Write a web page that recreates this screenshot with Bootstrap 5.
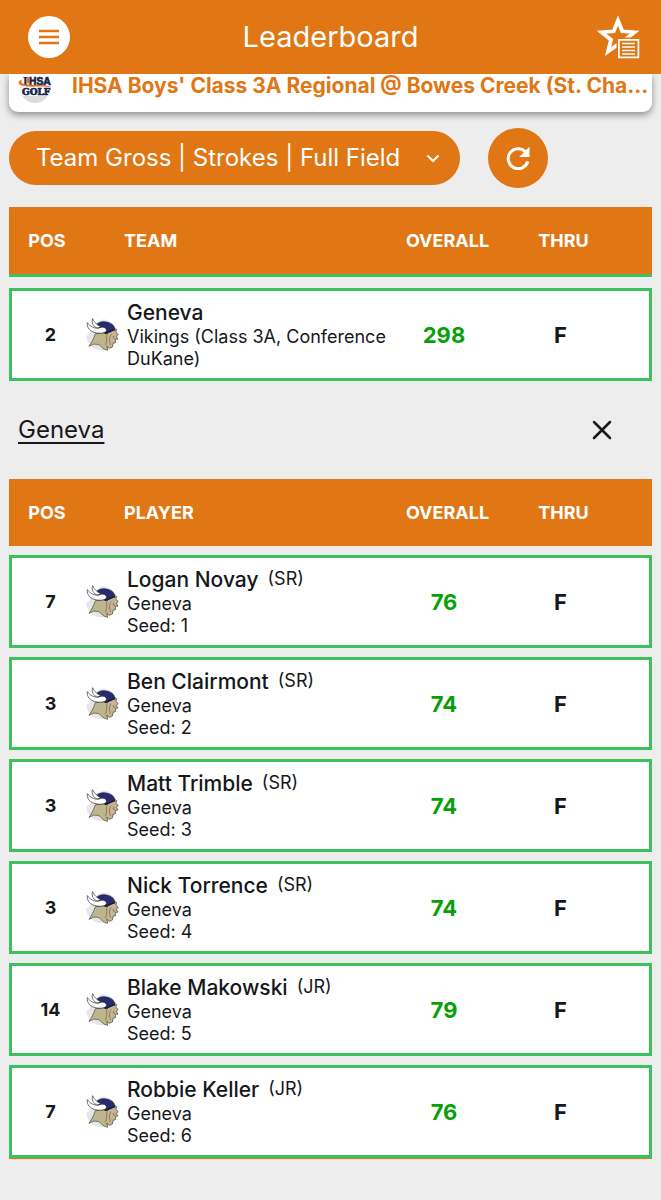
<!DOCTYPE html>
<html lang="en">
<head>
<meta charset="utf-8">
<meta name="viewport" content="width=device-width, initial-scale=1">
<title>Leaderboard</title>
<link href="https://cdn.jsdelivr.net/npm/bootstrap@5.3.0/dist/css/bootstrap.min.css" rel="stylesheet">
<style>
  :root { --brand: #e07714; --ink: #16171b; --edge: #3cc15d; --page: #ededed; }
  body { font-family: Inter, "Liberation Sans", sans-serif; background: var(--page); color: var(--ink); }
  .topbar { background: var(--brand); height: 74px; padding: 0 20px 0 28px; display: grid; grid-template-columns: 1fr auto 1fr; }
  .topbar h1 { font-size: 29px; line-height: 36px; font-weight: 400; padding-right: 8px; }
  .menu-btn { width: 42px; height: 42px; background: #fff; }
  .page-main { padding: 0 9px; }
  .event-card { background: #fff; border-radius: 0 0 9px 9px; height: 38px; padding: 0 4px 0 9px; box-shadow: 0 3px 7px rgba(0,0,0,.4); }
  .event-card a { color: var(--brand); font-size: 21px; line-height: 24px; font-weight: 700; margin-left: 20px; }
  .filters { gap: 28px; margin-top: 16px; margin-bottom: 19px; }
  .filter-pill { flex: 0 1 451px; height: 54px; border: 0; border-radius: 27px; padding: 0 56px 0 27px; font-size: 24px; line-height: 30px; color: #fff; background-color: var(--brand);
    background-image: url("data:image/svg+xml,%3Csvg xmlns='http://www.w3.org/2000/svg' viewBox='0 0 14 9'%3E%3Cpath d='M1.5 1.5 7 7l5.500-5.500' fill='none' stroke='white' stroke-width='2.200'/%3E%3C/svg%3E");
    background-position: right 20px center; background-size: 14px 9px; }
  .refresh-btn { width: 60px; height: 60px; background: var(--brand) !important; }
  .board { width: 100%; table-layout: fixed; border-collapse: separate; border-spacing: 0 9px; margin: -9px 0; }
  .board.scrolled { border-spacing: 0 11px; margin: -11px 0; }
  .board.scrolled th { height: 70px; border-bottom: 3px solid var(--edge); }
  .col-pos { width: 76px; } .col-overall { width: 105px; } .col-thru { width: 152px; }
  .board th { background: var(--brand); color: #fff; height: 67px; font-size: 18px; line-height: 22px; font-weight: 700; text-align: center; }
  .board th:nth-child(2) { text-align: left; padding-left: 39px; }
  .board th:last-child { padding-right: 26px; }
  .board td { background: #fff; height: 93px; border: solid var(--edge); border-width: 3px 0; text-align: center; vertical-align: middle; font-size: 22px; line-height: 26px; font-weight: 700; }
  .board td:first-child { border-left-width: 3px; font-size: 18px; padding-left: 5px; }
  .board td:nth-child(2) { text-align: left; font-weight: 400; }
  .board td:nth-child(3) { color: #08a008; padding-right: 8px; }
  .board td:last-child { border-right-width: 3px; padding-right: 29px; }
  .entry { gap: 8px; }
  .who { font-size: 21px; line-height: 26px; font-weight: 500; }
  .grade { font-size: 18px; line-height: 24px; margin-left: 9px; font-weight: 400; }
  .detail { font-size: 18px; line-height: 22px; }
  .team-head { height: 98px; padding: 0 38px 0 9px; }
  .team-head a { color: var(--ink); font-size: 24px; line-height: 30px; text-underline-offset: 4px; }
  .roster { border-bottom: 1px solid var(--brand); }
</style>
</head>
<body>
<svg class="d-none" aria-hidden="true">
  <symbol id="viking" viewBox="0 0 100 100">
    <circle cx="48" cy="51" r="47" fill="#e6e6ea"/>
    <path d="M0 0H60L34 12 8 50 0 54Z" fill="#fff"/>
    <path d="M28 48C24 62 17 74 9 86L24 79 37 80C45 83 47 91 56 95L66 98 63 85 71 92 80 88 82 77 90 74 88 65 97 64 92 55 98 50 90 43 93 35 84 31 72 40 58 44Z" fill="#bdb68d" stroke="#45412f" stroke-width="2"/>
    <path d="M72 42 84 33 88 42 92 51 85 56 88 68 79 72 76 84 70 88 66 74 72 62 66 52Z" fill="#ccb398"/>
    <path d="M66 45C58 57 67 66 59 82M76 50C68 62 72 70 74 82M84 54C80 60 84 63 88 63" fill="none" stroke="#6b5d42" stroke-width="2"/>
    <path d="M31 26C32 14 46 10 60 12 76 14 87 23 87 34L74 40 62 46 40 40Z" fill="#272b72" stroke="#17192f" stroke-width="2"/>
    <path d="M56 46C66 48 76 37 88 36" fill="none" stroke="#17192f" stroke-width="4"/>
    <path d="M20 2C16 15 22 25 34 31L45 26C35 22 26 15 20 2Z" fill="#fff" stroke="#272838" stroke-width="2"/>
    <path d="M4 14C2 30 13 42 31 45 46 48 60 45 62 38 62 27 48 25 38 31 26 32 12 26 4 14Z" fill="#fff" stroke="#272838" stroke-width="2"/>
  </symbol>
</svg>

<header class="topbar sticky-top align-items-center">
  <button type="button" class="btn menu-btn rounded-circle p-0 border-0 d-flex align-items-center justify-content-center" aria-label="Menu">
    <svg width="20" height="16" viewBox="0 0 20 16"><path d="M0 2h20M0 8h20M0 14h20" stroke="#e07714" stroke-width="2.300"/></svg>
  </button>
  <h1 class="m-0 text-white">Leaderboard</h1>
  <button type="button" class="btn p-0 border-0 d-flex justify-content-end" aria-label="Favorites">
    <svg width="44" height="44" viewBox="0 0 44 44" fill="none">
      <path d="M21 5.500 25.300 16.300 37.500 17.200 28 24.700 31 36 21 29.500 11 36.500 14 24.700 4.500 17.200 16.700 16.300Z" stroke="#fff" stroke-width="3.800"/>
      <path d="M19.500 22.500h23v21h-23z" fill="#e07714"/>
      <path d="M21.900 24.900h19.500v17.500H21.900z" stroke="#fff" stroke-width="1.700"/>
      <path d="M25 28.500h13M25 32h13M25 35.500h13M25 39h13" stroke="#fff" stroke-width="1.600"/>
    </svg>
  </button>
</header>

<main class="page-main">
  <section class="event-card d-flex align-items-start">
    <svg class="flex-shrink-0" width="34" height="30" viewBox="0 0 102 90" role="img" aria-label="IHSA Golf">
      <path d="M6 40h90a45 47 0 0 1-90 0Z" fill="#dcdcdc"/>
      <path d="M8 0h88v66H8z" fill="#fff"/>
      <text x="14" y="32" font-family="DejaVu Serif, serif" font-size="33" font-weight="700" fill="#14264f">I</text>
      <text x="33" y="32" font-family="Liberation Sans, sans-serif" font-size="31" font-weight="700" fill="#14264f" stroke="#14264f" stroke-width="2">HSA</text>
      <path d="M15 16C-2 21-4 31 17 36c27 5 55-2 84 4-25-12-55-5-78-9-15-3-16-9-8-15Z" fill="#e56f25"/>
      <path d="m29 7 7 7-3 9 5 8-11-4-2-9Z" fill="#e56f25"/>
      <text x="12" y="63" font-family="DejaVu Serif, serif" font-size="27" font-weight="700" fill="#14264f" stroke="#14264f" stroke-width="2">GOLF</text>
    </svg>
    <a href="#" class="text-decoration-none text-nowrap">IHSA Boys' Class 3A Regional @ Bowes Creek (St. Cha...</a>
  </section>

  <div class="filters d-flex align-items-center">
    <select class="form-select filter-pill" aria-label="Leaderboard view">
      <option>Team Gross | Strokes | Full Field</option>
    </select>
    <button type="button" class="btn refresh-btn rounded-circle p-0 border-0 flex-shrink-0 d-flex align-items-center justify-content-center" aria-label="Refresh">
      <svg width="24" height="24" viewBox="0 0 24 24" fill="none"><path d="M19.500 5.800A10 10 0 1 0 21.800 15.500" stroke="#fff" stroke-width="3"/><path d="M23.500.8V11H13.300Z" fill="#fff"/></svg>
    </button>
  </div>

  <table class="board scrolled">
    <colgroup><col class="col-pos"><col><col class="col-overall"><col class="col-thru"></colgroup>
    <thead><tr><th scope="col">POS</th><th scope="col">TEAM</th><th scope="col">OVERALL</th><th scope="col">THRU</th></tr></thead>
    <tbody>
      <tr><td>2</td><td><div class="entry d-flex align-items-center"><svg class="flex-shrink-0" width="33" height="33"><use href="#viking"/></svg><div><div class="who">Geneva</div><div class="detail">Vikings (Class 3A, Conference DuKane)</div></div></div></td><td>298</td><td>F</td></tr>
    </tbody>
  </table>

  <div class="team-head d-flex align-items-center justify-content-between">
    <a href="#">Geneva</a>
    <button type="button" class="btn p-0 border-0 d-flex" aria-label="Close">
      <svg width="24" height="24" viewBox="0 0 24 24"><path d="m4 4 16 16M20 4 4 20" stroke="#16171b" stroke-width="2.500" stroke-linecap="round"/></svg>
    </button>
  </div>

  <div class="roster">
  <table class="board">
    <colgroup><col class="col-pos"><col><col class="col-overall"><col class="col-thru"></colgroup>
    <thead><tr><th scope="col">POS</th><th scope="col">PLAYER</th><th scope="col">OVERALL</th><th scope="col">THRU</th></tr></thead>
    <tbody id="players"></tbody>
  </table>
  </div>
</main>

<script>
  const players = [
    [7, "Logan Novay", "SR", 76], [3, "Ben Clairmont", "SR", 74], [3, "Matt Trimble", "SR", 74],
    [3, "Nick Torrence", "SR", 74], [14, "Blake Makowski", "JR", 79], [7, "Robbie Keller", "JR", 76]
  ];
  document.getElementById("players").innerHTML = players.map(([pos, name, grade, score], i) =>
    `<tr><td>${pos}</td><td><div class="entry d-flex align-items-center"><svg class="flex-shrink-0" width="33" height="33"><use href="#viking"/></svg><div><div class="who d-flex"><span>${name}</span><span class="grade">(${grade})</span></div><div class="detail">Geneva</div><div class="detail">Seed: ${i + 1}</div></div></div></td><td>${score}</td><td>F</td></tr>`
  ).join("");
</script>
<script src="https://cdn.jsdelivr.net/npm/bootstrap@5.3.0/dist/js/bootstrap.bundle.min.js"></script>
</body>
</html>
